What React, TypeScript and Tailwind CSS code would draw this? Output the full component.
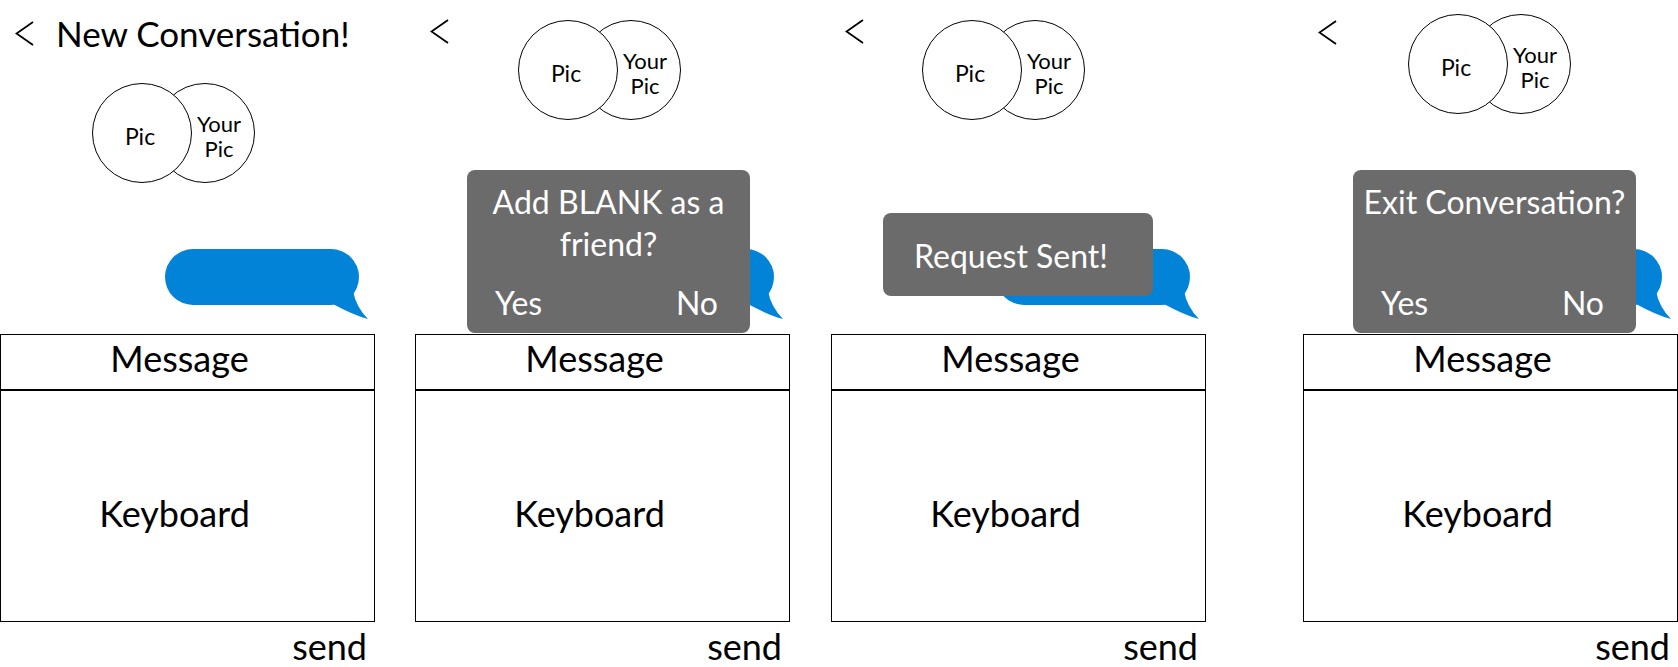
import type { ReactNode } from "react";

const font = { fontFamily: "Lato, 'Open Sans', sans-serif" };

function Chevron() {
  return (
    <svg width="19" height="25" viewBox="0 0 19 25" className="shrink-0">
      <polyline points="18,1 1.5,12.5 18,24" fill="none" stroke="#000" strokeWidth="1.8" />
    </svg>
  );
}

function Avatars() {
  return (
    <div className="flex">
      <div className="relative z-10 flex h-[100px] w-[100px] items-center justify-center rounded-full border border-black bg-white pr-[4px] pt-[6px] text-[23px] leading-none text-black">
        Pic
      </div>
      <div className="-ml-[37px] flex h-[100px] w-[100px] flex-col items-center justify-center rounded-full border border-black bg-white pl-[28px] pt-[6px] text-[22px] leading-[27px] text-black">
        <span>Your</span>
        <span className="-mt-[2px]">Pic</span>
      </div>
    </div>
  );
}

function Bubble() {
  return (
    <div className="relative ml-[165px] h-[56px] w-[194px] rounded-full bg-[#0283d8]">
      <svg width="40" height="40" viewBox="0 0 40 40" className="absolute left-[168px] top-[40px]">
        <path d="M0 15 L20 2 Q23 18 35 30 Q20 26 0 15 Z" fill="#0283d8" />
      </svg>
    </div>
  );
}

function Panel({ top, dialog, className }: { top: ReactNode; dialog?: ReactNode; className?: string }) {
  return (
    <div className={`flex w-[375px] shrink-0 flex-col ${className ?? ""}`}>
      <div className="relative flex h-[334px] flex-col">
        {top}
        <div className="mt-auto mb-[29px]">
          <Bubble />
        </div>
        {dialog}
      </div>
      <div className="flex h-[288px] flex-col border border-black">
        <div className="flex h-[56px] items-center justify-center border-b-2 border-black pb-[8px] pr-[16px] text-[36px] leading-none">
          Message
        </div>
        <div className="flex flex-1 items-center justify-center pr-[26px] pt-[14px] text-[36px] leading-none">
          Keyboard
        </div>
      </div>
      <div className="mt-[6px] pr-[8px] text-right text-[36px] leading-none">send</div>
    </div>
  );
}

function ConfirmDialog({ title, left }: { title: ReactNode; left: string }) {
  return (
    <div
      className={`absolute top-[170px] flex h-[163px] w-[283px] flex-col rounded-[8px] bg-[#6b6b6b] px-[8px] text-white ${left}`}
    >
      <div className="mt-[11px] text-center text-[32px] leading-[42px]">{title}</div>
      <div className="mt-auto mb-[14px] flex justify-between pl-[20px] pr-[24px] text-[32px] leading-none">
        <span>Yes</span>
        <span>No</span>
      </div>
    </div>
  );
}

export default function App() {
  return (
    <div className="flex h-[667px] w-[1678px] overflow-hidden bg-white text-black" style={font}>
      <Panel
        top={
          <>
            <div className="mt-[16px] flex h-[35px] items-center">
              <div className="ml-[15px]">
                <Chevron />
              </div>
              <span className="ml-[22px] text-[35px] leading-none">New Conversation!</span>
            </div>
            <div className="ml-[92px] mt-[32px]">
              <Avatars />
            </div>
          </>
        }
      />
      <Panel
        className="ml-[40px]"
        top={
          <div className="mt-[20px] flex items-start">
            <div className="ml-[15px] mt-[-1px]">
              <Chevron />
            </div>
            <div className="ml-[69px]">
              <Avatars />
            </div>
          </div>
        }
        dialog={
          <ConfirmDialog
            left="left-[52px]"
            title={
              <>
                Add BLANK as a
                <br />
                friend?
              </>
            }
          />
        }
      />
      <Panel
        className="ml-[41px]"
        top={
          <div className="mt-[20px] flex items-start">
            <div className="ml-[14px] mt-[-1px]">
              <Chevron />
            </div>
            <div className="ml-[58px]">
              <Avatars />
            </div>
          </div>
        }
        dialog={
          <div className="absolute left-[52px] top-[213px] flex h-[83px] w-[270px] items-center rounded-[8px] bg-[#6b6b6b] pl-[31px] pt-[2px] text-[32px] leading-none text-white">
            Request Sent!
          </div>
        }
      />
      <Panel
        className="ml-[97px]"
        top={
          <div className="mt-[14px] flex items-start">
            <div className="ml-[15px] mt-[6px]">
              <Chevron />
            </div>
            <div className="ml-[71px]">
              <Avatars />
            </div>
          </div>
        }
        dialog={<ConfirmDialog left="left-[50px]" title="Exit Conversation?" />}
      />
    </div>
  );
}
